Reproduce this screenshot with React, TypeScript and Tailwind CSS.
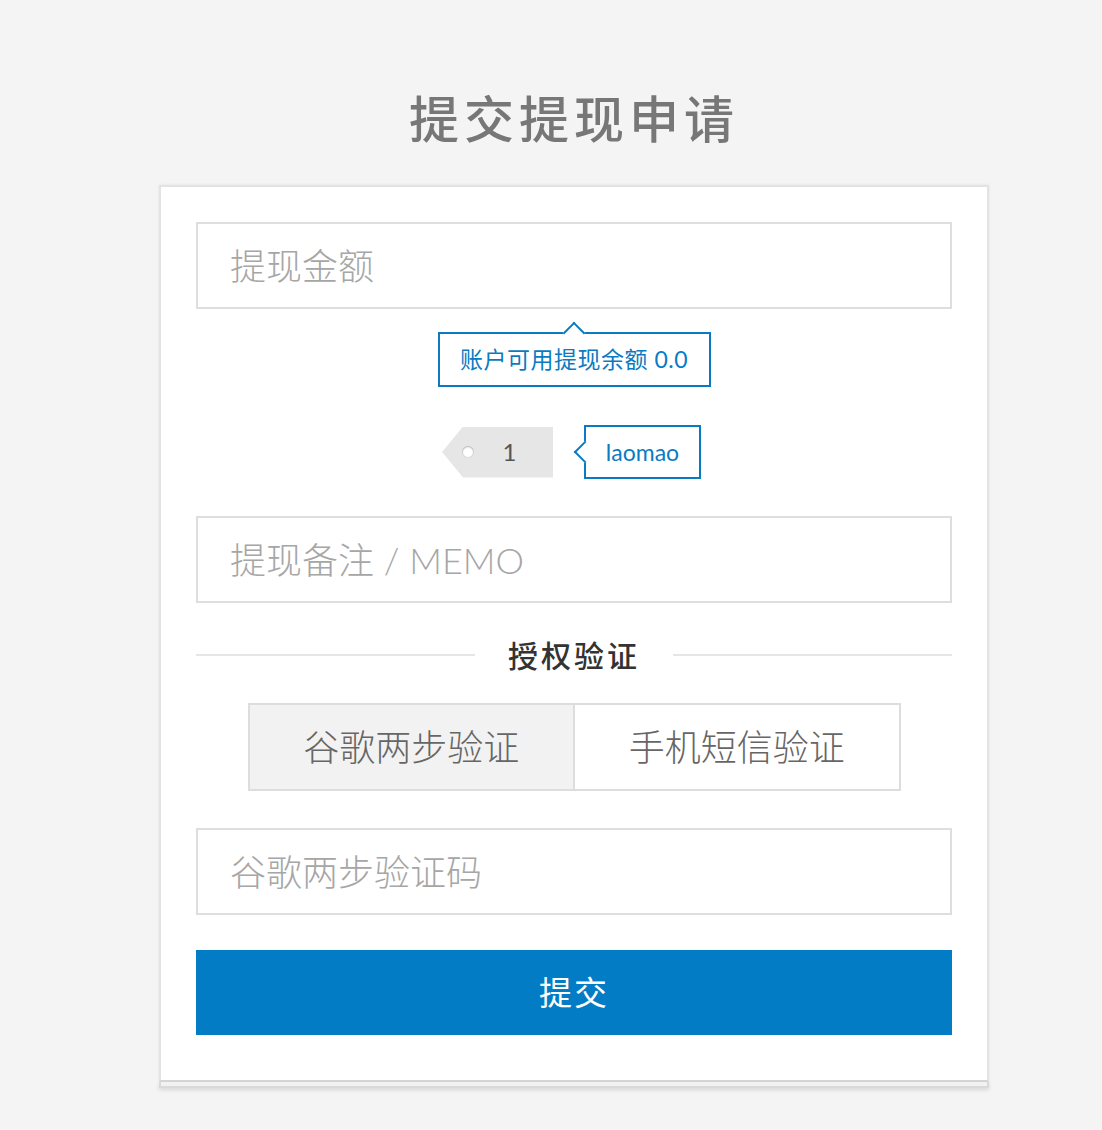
import React from "react";

const FONT = "font-['Lato','Noto_Sans_CJK_SC',sans-serif]";

function Field({ placeholder }: { placeholder: string }) {
  return (
    <input
      type="text"
      placeholder={placeholder}
      className={`${FONT} block w-full h-[87px] border-2 border-[#dedede] bg-white px-[32px] text-[36px] font-light text-[#555] outline-none placeholder:text-[#a6a6a6]`}
    />
  );
}

export default function App() {
  return (
    <div className={`${FONT} min-h-screen bg-[#f4f4f4] flex flex-col items-center pl-[46px] pt-[90px] pb-[40px]`}>
      <h1 className="text-[50px] leading-[58px] tracking-[5px] font-medium text-[#777]">提交提现申请</h1>

      <div className="mt-[37px] w-[830px] flex flex-col items-center">
        <div className="w-full bg-white border-2 border-[#e3e3e3] border-b-[#d6d6d6] shadow-[0_0_3px_rgba(0,0,0,0.07)] px-[35px] pt-[35px] pb-[45px] flex flex-col items-center">
          <Field placeholder="提现金额" />

          {/* tooltip */}
          <div className="relative mt-[23px] w-[273px] h-[55px] border-2 border-[#0a7bc2] bg-white flex items-center justify-center">
            <span className="absolute left-1/2 -top-[9px] -ml-[8px] w-[16px] h-[16px] rotate-45 bg-white border-t-2 border-l-2 border-[#0a7bc2]" />
            <span className="relative text-[23px] text-[#0a7bc2] tracking-[0.5px]">账户可用提现余额 0.0</span>
          </div>

          {/* tag row */}
          <div className="mt-[38px] pr-[5px] flex items-center">
            <div className="relative w-[111px] h-[51px] bg-[#e6e6e6] [clip-path:polygon(21px_0,100%_0,100%_100%,21px_100%,0_50%)] flex items-center">
              <span className="absolute left-[20px] top-1/2 -mt-[6px] w-[12px] h-[12px] rounded-full bg-white shadow-[inset_0_0_0_1px_rgba(0,0,0,0.12),inset_0_1px_2px_rgba(0,0,0,0.2)]" />
              <span className="ml-[21px] flex-1 text-center text-[24px] text-[#555] pl-[3px]">1</span>
            </div>
            <div className="relative ml-[31px] w-[117px] h-[54px] border-2 border-[#0a7bc2] bg-white flex items-center justify-center">
              <span className="absolute top-1/2 -left-[9px] -mt-[8px] w-[16px] h-[16px] rotate-45 bg-white border-b-2 border-l-2 border-[#0a7bc2]" />
              <span className="relative text-[23px] text-[#0a7bc2]">laomao</span>
            </div>
          </div>

          <div className="mt-[37px] w-full">
            <Field placeholder="提现备注 / MEMO" />
          </div>

          {/* divider */}
          <div className="mt-[32px] w-full h-[40px] flex items-center">
            <div className="flex-1 h-[2px] bg-[#e6e6e6]" />
            <span className="px-[33px] text-[30px] leading-none tracking-[3px] font-medium text-[#333]">授权验证</span>
            <div className="flex-1 h-[2px] bg-[#e6e6e6]" />
          </div>

          {/* toggle */}
          <div className="mt-[28px] w-[653px] h-[88px] border-2 border-[#dddddd] flex">
            <button className="flex-1 bg-[#f2f2f2] border-r-2 border-[#dddddd] text-[36px] font-light text-[#666] flex items-center justify-center">
              谷歌两步验证
            </button>
            <button className="flex-1 bg-white text-[36px] font-light text-[#666] flex items-center justify-center">
              手机短信验证
            </button>
          </div>

          <div className="mt-[37px] w-full">
            <Field placeholder="谷歌两步验证码" />
          </div>

          <button className="mt-[35px] w-full h-[85px] bg-[#027cc4] text-white text-[33px] tracking-[2px] flex items-center justify-center">
            提交
          </button>
        </div>
        <div className="w-full h-[6px] bg-[#f2f2f2] border-2 border-t-0 border-[#d9d9d9] shadow-[0_2px_4px_rgba(0,0,0,0.12)]" />
      </div>
    </div>
  );
}
